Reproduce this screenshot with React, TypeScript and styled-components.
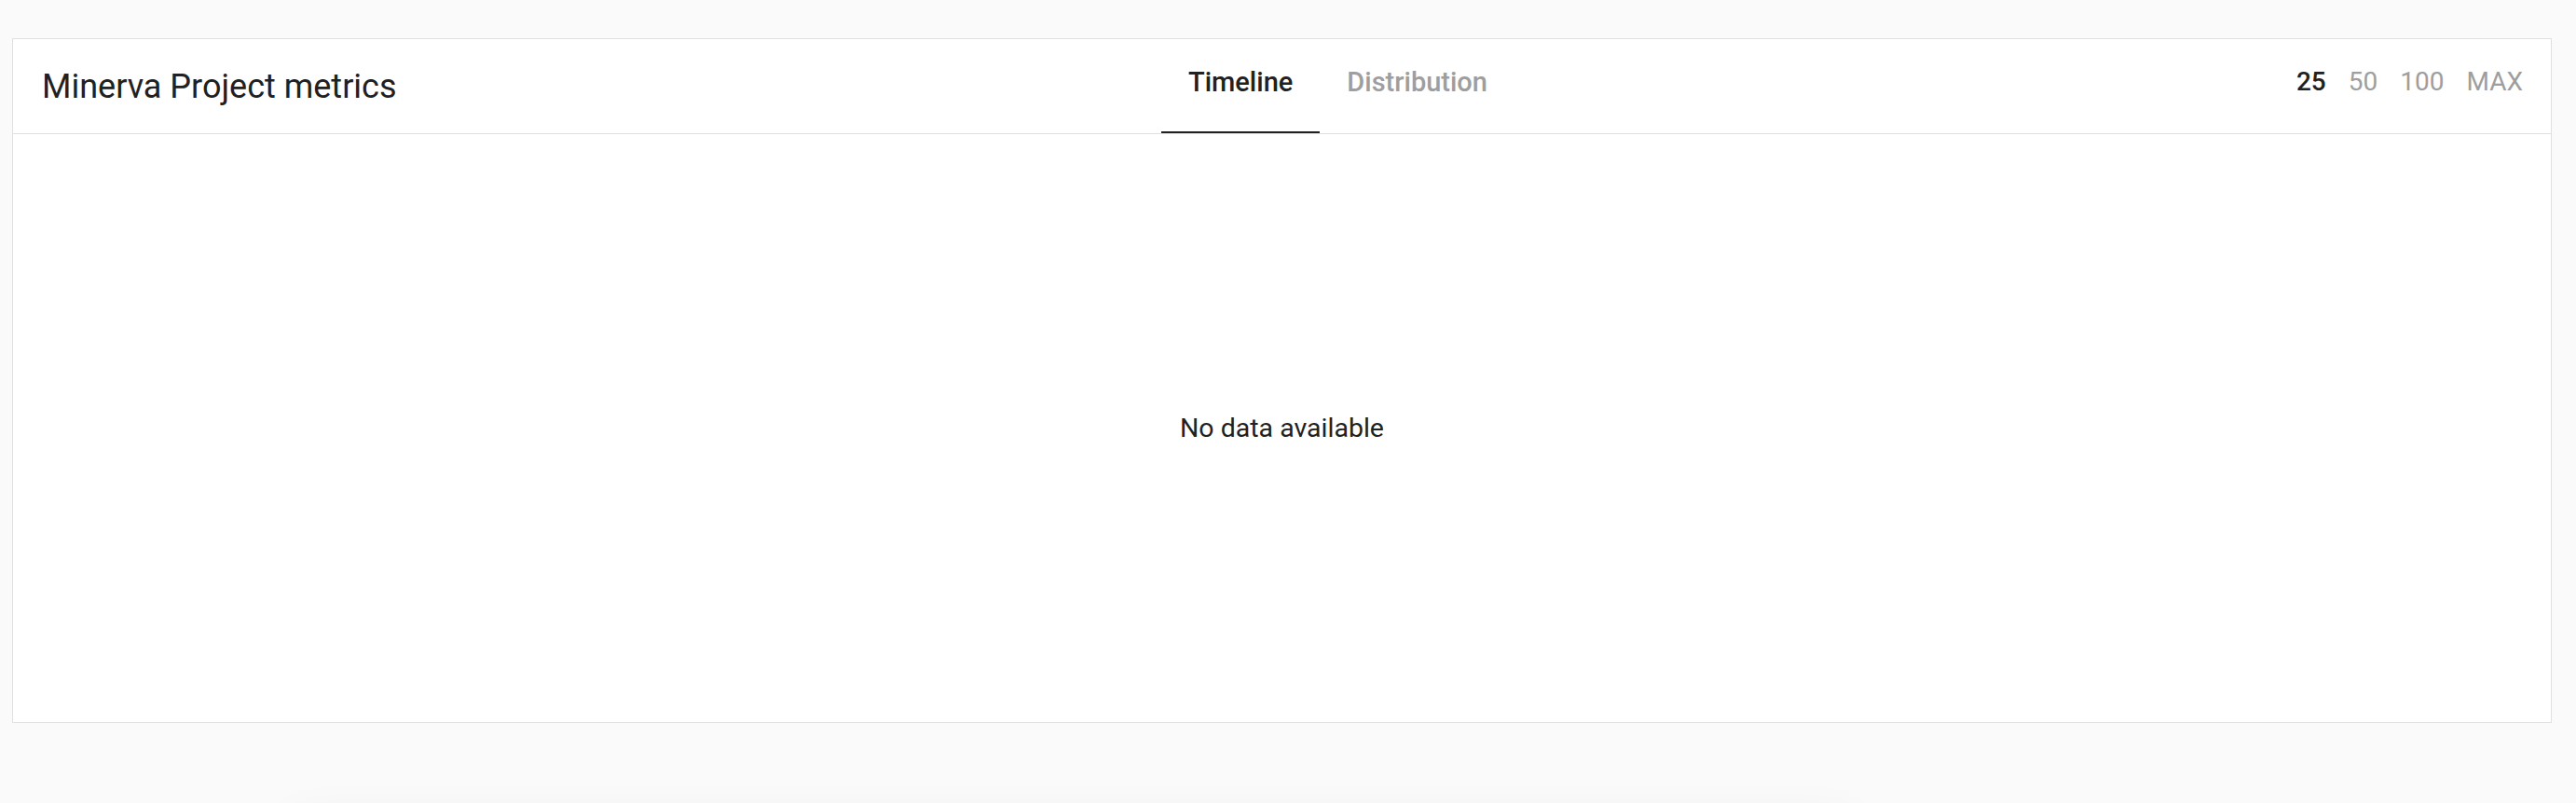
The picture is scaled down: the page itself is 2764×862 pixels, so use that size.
import styled, { createGlobalStyle } from 'styled-components'

const GlobalStyle = createGlobalStyle`
  html, body {
    margin: 0;
    background-color: #fafafa;
    font-family: Roboto, "Liberation Sans", sans-serif;
    color: #212121;
  }
`

const Page = styled.div`
  padding: 41px 26px 0 13px;
`

const Card = styled.section`
  background-color: #ffffff;
  border: 1px solid #e0e0e0;
  display: flex;
  flex-direction: column;
`

const Header = styled.header`
  display: grid;
  grid-template-columns: 1201px auto 1fr;
  align-items: stretch;
  height: 101px;
  padding: 0 30px 0 31px;
  border-bottom: 1px solid #e0e0e0;
`

const Title = styled.h2`
  align-self: center;
  margin: 0;
  font-size: 36px;
  font-weight: 400;
  line-height: 42px;
  color: #212121;
`

const Tabs = styled.nav`
  display: flex;
`

const Tab = styled.div<{ active?: boolean }>`
  padding: 28px 29px 0;
  font-size: 29px;
  font-weight: 500;
  line-height: 36px;
  color: ${(props) => (props.active ? '#212121' : '#9e9e9e')};
  border-bottom: 2px solid ${(props) => (props.active ? '#212121' : 'transparent')};
  cursor: pointer;
`

const RangeList = styled.div`
  display: flex;
  justify-content: flex-end;
  gap: 24px;
  padding-top: 28px;
`

const RangeOption = styled.span<{ active?: boolean }>`
  font-size: 28px;
  font-weight: ${(props) => (props.active ? 500 : 400)};
  line-height: 36px;
  color: ${(props) => (props.active ? '#212121' : '#9e9e9e')};
  cursor: pointer;
`

const Body = styled.div`
  height: 631px;
  display: flex;
  align-items: center;
  justify-content: center;
`

const EmptyText = styled.p`
  margin: 0;
  font-size: 28.5px;
  line-height: 34px;
  color: #212121;
`

const FloatingBar = styled.div`
  position: fixed;
  left: 300px;
  top: 878px;
  width: 1700px;
  height: 80px;
  border-radius: 40px;
  background-color: #fafafa;
  box-shadow: 0 0 48px rgba(0, 0, 0, 0.06);
`

const ranges = ['25', '50', '100', 'MAX']

const App = () => (
  <>
    <GlobalStyle />
    <Page>
      <Card>
        <Header>
          <Title>Minerva Project metrics</Title>
          <Tabs>
            <Tab active>Timeline</Tab>
            <Tab>Distribution</Tab>
          </Tabs>
          <RangeList>
            {ranges.map((r) => (
              <RangeOption key={r} active={r === '25'}>
                {r}
              </RangeOption>
            ))}
          </RangeList>
        </Header>
        <Body>
          <EmptyText>No data available</EmptyText>
        </Body>
      </Card>
    </Page>
    <FloatingBar />
  </>
)

export default App
